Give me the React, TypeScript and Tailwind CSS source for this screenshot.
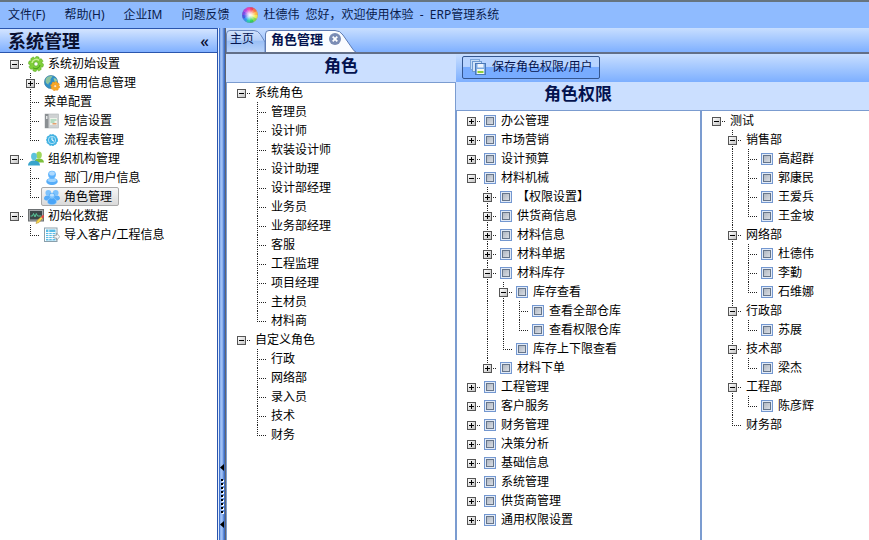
import { useState, type ReactNode } from "react";

type TreeNode = {
  label: string;
  icon?: ReactNode;
  check?: boolean;
  selected?: boolean;
  collapsed?: boolean;
  children?: TreeNode[];
};

/* ---------- icons ---------- */

const GearShape = ({ fill, stroke, hole }: { fill: string; stroke: string; hole: string }) => (
  <>
    {[0, 45, 90, 135].map((a) => (
      <rect key={a} x="6" y=".5" width="4" height="15" rx="1.500" fill={fill} stroke={stroke} strokeWidth=".5" transform={`rotate(${a + 12} 8 8)`} />
    ))}
    <circle cx="8" cy="8" r="5.600" fill={fill} />
    <circle cx="8" cy="8" r="2.200" fill={hole} stroke={stroke} strokeWidth=".8" />
  </>
);

const icon = "h-4 w-4 shrink-0";

const GearIcon = () => (
  <svg className={icon} viewBox="0 0 16 16">
    <GearShape fill="#7fcf3a" stroke="#58aa22" hole="#fff" />
    <path d="M4 7a4.300 4.300 0 0 1 7-2.600" fill="none" stroke="#c8f092" strokeWidth="1.500" />
    <path d="M12 9a4.300 4.300 0 0 1-7 2.600" fill="none" stroke="#4fa51e" strokeWidth="1.200" />
  </svg>
);

const GlobeIcon = () => (
  <svg className={icon} viewBox="0 0 16 16">
    <circle cx="7" cy="7" r="6.600" fill="#2f8fc8" stroke="#3a7c9a" strokeWidth=".6" />
    <path d="M2 3.500C4 .8 7 .6 8.500 1.300 8 3 6 3.500 6.500 5.500 7 7.500 4.500 7 4.500 9.500 2.500 9 .8 7 2 3.500z" fill="#8cc4a0" />
    <path d="M9.500 3.500c2-.6 3 .5 3.600 2.500L11 7.500z" fill="#9ccfa0" />
    <g transform="translate(6.200 6.200) scale(.62)">
      <GearShape fill="#f9a825" stroke="#e07f10" hole="#fff3d0" />
    </g>
  </svg>
);

const BookIcon = () => (
  <svg className={icon} viewBox="0 0 16 16">
    <rect x="1" y="1" width="13.500" height="14" fill="#cfd2d3" stroke="#b0b4b6" strokeWidth=".6" />
    <rect x="1" y="1" width="3.500" height="14" fill="#8b9093" />
    <rect x="2" y="3" width="1.500" height="3" fill="#e4e6e6" />
    <rect x="6" y="5" width="7" height="7" fill="#eef3ea" />
    <path d="M6.500 7h6M6.500 9h4" stroke="#7cc49a" strokeWidth="1" />
    <path d="M8.500 10.800h4" stroke="#e28b52" strokeWidth="1.200" />
  </svg>
);

const ClockIcon = () => (
  <svg className={icon} viewBox="0 0 16 16">
    <circle cx="8" cy="8" r="5.500" fill="#39aee0" stroke="#4bb4e2" strokeWidth="1" strokeDasharray="2 1.200" />
    <circle cx="8" cy="8" r="3.700" fill="#44b4e6" stroke="#c8ecfa" strokeWidth=".8" />
    <path d="M8 5.400V8l2 1.200" fill="none" stroke="#fff" strokeWidth="1" />
  </svg>
);

const TeamIcon = () => (
  <svg className={icon} viewBox="0 0 16 16">
    <ellipse cx="11" cy="4" rx="2.800" ry="3.500" fill="#9ed65a" />
    <path d="M7 11.500V9c.8-1 2-1.500 4-1.500 3 0 4.800 1.500 5 4z" fill="#7cc03c" />
    <ellipse cx="6" cy="5.500" rx="2.900" ry="3.700" fill="#5cc2dc" />
    <path d="M0 14.500c.3-3.500 2.500-5 6-5s5.700 1.500 6 5z" fill="#38a4cc" />
  </svg>
);

const UserIcon = () => (
  <svg className={icon} viewBox="0 0 16 16">
    <path d="M2.300 11.500C2.500 8.800 5 8 8 8s5.500.8 5.700 3.500c.2 4.800-11.600 4.800-11.400 0z" fill="#56adf9" />
    <ellipse cx="8" cy="10.300" rx="4.500" ry="1.800" fill="#9ed4ff" />
    <circle cx="8" cy="4.600" r="3.900" fill="#5cb2fc" />
    <ellipse cx="8" cy="3.400" rx="2.800" ry="2.100" fill="#aedaff" />
  </svg>
);

const GroupIcon = () => (
  <svg className={icon} viewBox="0 0 16 16">
    <path d="M0 9.500C0 7 2 6.500 4 6.500s3 .7 3 3-7 3-7 0zM9 9.500c0-2.500 1-3 3-3s4 .5 4 3-7 3-7 0z" fill="#55abf8" />
    <circle cx="4.300" cy="3.800" r="2.900" fill="#7cc2fd" />
    <circle cx="11.700" cy="3.800" r="2.900" fill="#7cc2fd" />
    <path d="M3.500 13c0-3 2-3.800 4.500-3.800s4.500.8 4.500 3.800c0 3.500-9 3.500-9 0z" fill="#4aa5f8" stroke="#a4d5fe" strokeWidth=".6" />
    <circle cx="8" cy="7" r="3" fill="#7fc4fe" stroke="#4ba2ee" strokeWidth=".5" />
    <ellipse cx="8" cy="6.200" rx="1.900" ry="1.400" fill="#bfe2ff" />
  </svg>
);

const MonitorIcon = () => (
  <svg className={icon} viewBox="0 0 16 16">
    <rect x=".5" y="1.500" width="15" height="11.500" fill="#a5a9ab" stroke="#6c7072" />
    <rect x="2" y="3" width="12" height="8.500" fill="#3c4648" />
    <path d="M2.500 8h2l1-2.500L7 9l1.300-3.500L9.500 8h4" fill="none" stroke="#59d6a2" strokeWidth=".9" />
    <path d="m13.500 8.500-4.500 4-1 3 3-1 4-4.500z" fill="#f5d750" stroke="#a8842a" strokeWidth=".5" />
    <path d="m13 9 1.500 1.500 1.500-1.600V7.300l-1.200-.3z" fill="#e04848" />
  </svg>
);

const ImportIcon = () => (
  <svg className={icon} viewBox="0 0 16 16">
    <rect x=".5" y="1" width="12.500" height="13.500" fill="#fff" stroke="#8aa0ac" />
    <rect x="2" y="2.500" width="9.500" height="11" fill="#58bce6" />
    <path d="M2 5.500h9.500M2 7.500h9.500M2 9.500h9.500M2 11.500h9.500" stroke="#fff" strokeWidth=".9" />
    <path d="M4.800 2.500v11M8.200 5v8.500" stroke="#fff" strokeWidth=".8" />
    <path d="M10 8.300h2.500V6l3.300 3.700-3.300 3.600V11H10z" fill="#f4f6f6" stroke="#8a9296" strokeWidth=".7" />
  </svg>
);

const SaveIcon = () => (
  <svg className={icon} viewBox="0 0 16 16">
    <rect x=".5" y=".5" width="9" height="10" fill="#c4dcf6" stroke="#7ba5da" />
    <rect x="2.500" y="2.500" width="9" height="10" fill="#d2e4f8" stroke="#6f9bd2" />
    <rect x="5.500" y="4.500" width="10" height="11" fill="#7fabe2" stroke="#4a78b8" />
    <rect x="7.500" y="5" width="6" height="3.500" fill="#eef5fd" />
    <rect x="7" y="10" width="7" height="5" fill="#f4f8ee" />
    <path d="M7.500 13h6" stroke="#8fd03c" strokeWidth="2" />
  </svg>
);

const WHEEL = [
  ["#f5405c", 0], ["#fb7440", 30], ["#ffb840", 60], ["#f0ea48", 90], ["#84e04c", 120], ["#30d05c", 150],
  ["#28ccb4", 180], ["#2c98ee", 210], ["#4058e8", 240], ["#7a48e8", 270], ["#bc44e0", 300], ["#ee40b4", 330],
] as const;

const ColorWheel = () => (
  <svg className={icon} viewBox="0 0 16 16">
    <defs>
      <radialGradient id="glow">
        <stop offset="0" stopColor="#fff" />
        <stop offset=".3" stopColor="#fff" stopOpacity=".7" />
        <stop offset=".8" stopColor="#fff" stopOpacity="0" />
      </radialGradient>
    </defs>
    {WHEEL.map(([c, a]) => (
      <path key={a} d="M8 8 8 0A8 8 0 0 1 12.300 1.250z" fill={c} transform={`rotate(${a} 8 8)`} />
    ))}
    <circle cx="8" cy="8" r="7.500" fill="url(#glow)" />
    <circle cx="8" cy="8" r="7.600" fill="none" stroke="#8a7aa8" strokeOpacity=".5" strokeWidth=".7" />
  </svg>
);

/* ---------- data ---------- */

const names = (...list: string[]): TreeNode[] => list.map((label) => ({ label }));
const boxes = (...list: string[]): TreeNode[] => list.map((label) => ({ label, check: true }));
const closed = (...list: string[]): TreeNode[] =>
  list.map((label) => ({ label, check: true, collapsed: true, children: [] }));

const NAV: TreeNode[] = [
  {
    label: "系统初始设置",
    icon: <GearIcon />,
    children: [
      { label: "通用信息管理", icon: <GlobeIcon />, collapsed: true, children: [] },
      { label: "菜单配置" },
      { label: "短信设置", icon: <BookIcon /> },
      { label: "流程表管理", icon: <ClockIcon /> },
    ],
  },
  {
    label: "组织机构管理",
    icon: <TeamIcon />,
    children: [
      { label: "部门/用户信息", icon: <UserIcon /> },
      { label: "角色管理", icon: <GroupIcon />, selected: true },
    ],
  },
  {
    label: "初始化数据",
    icon: <MonitorIcon />,
    children: [{ label: "导入客户/工程信息", icon: <ImportIcon /> }],
  },
];

const ROLES: TreeNode[] = [
  {
    label: "系统角色",
    children: names("管理员", "设计师", "软装设计师", "设计助理", "设计部经理", "业务员", "业务部经理", "客服", "工程监理", "项目经理", "主材员", "材料商"),
  },
  { label: "自定义角色", children: names("行政", "网络部", "录入员", "技术", "财务") },
];

const PERMISSIONS: TreeNode[] = [
  ...closed("办公管理", "市场营销", "设计预算"),
  {
    label: "材料机械",
    check: true,
    children: [
      ...closed("【权限设置】", "供货商信息", "材料信息", "材料单据"),
      {
        label: "材料库存",
        check: true,
        children: [
          { label: "库存查看", check: true, children: boxes("查看全部仓库", "查看权限仓库") },
          { label: "库存上下限查看", check: true },
        ],
      },
      ...closed("材料下单"),
    ],
  },
  ...closed("工程管理", "客户服务", "财务管理", "决策分析", "基础信息", "系统管理", "供货商管理", "通用权限设置"),
];

const USERS: TreeNode[] = [
  {
    label: "测试",
    children: [
      { label: "销售部", children: boxes("高超群", "郭康民", "王爱兵", "王金坡") },
      { label: "网络部", children: boxes("杜德伟", "李勤", "石维娜") },
      { label: "行政部", children: boxes("苏展") },
      { label: "技术部", children: boxes("梁杰") },
      { label: "工程部", children: boxes("陈彦辉") },
      { label: "财务部" },
    ],
  },
];

/* ---------- tree ---------- */

const DOTS_V = "bg-[repeating-linear-gradient(to_bottom,#222_0_1px,transparent_1px_2px)]";
const DOTS_H = "bg-[repeating-linear-gradient(to_right,#222_0_1px,transparent_1px_2px)]";

function Guide({ line }: { line: boolean }) {
  return <span className="flex h-full w-4 shrink-0 pl-2">{line && <span className={`h-full w-px ${DOTS_V}`} />}</span>;
}

function Branch({ node, guides, last }: { node: TreeNode; guides: boolean[]; last: boolean }) {
  const [open, setOpen] = useState(!node.collapsed);
  const root = guides.length === 0;
  return (
    <li>
      <div className="flex h-[19px] items-center">
        {guides.map((line, i) => (
          <Guide key={i} line={line} />
        ))}
        <span className="grid h-full w-[19px] shrink-0">
          {!root && <span className={`col-start-1 row-start-1 ml-2 w-px ${last ? "h-[11px]" : "h-full"} ${DOTS_V}`} />}
          <span className={`col-start-1 row-start-1 mt-2.5 ml-2 h-px w-2.5 ${DOTS_H}`} />
          {node.children && (
            <button
              type="button"
              aria-label={`${open ? "收起" : "展开"}${node.label}`}
              onClick={() => setOpen(!open)}
              className="col-start-1 row-start-1 mt-1.5 ml-1 grid h-[9px] w-[9px] place-items-center border border-[#555] bg-linear-to-br from-white to-[#c4c4c4]"
            >
              <span className="col-start-1 row-start-1 h-px w-[5px] bg-black" />
              {!open && <span className="col-start-1 row-start-1 h-[5px] w-px bg-black" />}
            </button>
          )}
        </span>
        {node.check ? (
          <label className="flex items-center gap-[5px] pl-0.5 whitespace-nowrap">
            <input
              type="checkbox"
              className="mt-px h-3 w-3 shrink-0 appearance-none border border-[#7397d0] bg-linear-to-br from-[#a4acb8] to-[#e6e9ee] shadow-[inset_0_0_0_1px_#e2ebf8,inset_0_0_0_2px_#66758a] checked:bg-[#3f6fb8]"
            />
            <span>{node.label}</span>
          </label>
        ) : (
          <button
            type="button"
            className={`flex h-[19px] items-center gap-1 whitespace-nowrap ${
              node.selected
                ? "rounded-xs border border-[#a9a9a9] bg-linear-to-b from-[#f6f6f6] to-[#dadada] pr-1.5 pl-0.5"
                : "px-[3px]"
            }`}
          >
            {node.icon}
            <span>{node.label}</span>
          </button>
        )}
      </div>
      {open && node.children && <Tree nodes={node.children} guides={[...guides, !root && !last]} />}
    </li>
  );
}

function Tree({ nodes, guides = [] }: { nodes: TreeNode[]; guides?: boolean[] }) {
  return (
    <ul>
      {nodes.map((n, i) => (
        <Branch key={n.label} node={n} guides={guides} last={i === nodes.length - 1} />
      ))}
    </ul>
  );
}

/* ---------- page parts ---------- */

function MenuBar() {
  return (
    <header className="flex h-7 items-center border-t-2 border-[#66747f] bg-[#8fbbff] px-2 whitespace-nowrap text-[#0a1c4c]">
      <nav className="flex gap-[19px]">
        {["文件(F)", "帮助(H)", "企业IM", "问题反馈"].map((m) => (
          <button key={m} type="button">
            {m}
          </button>
        ))}
      </nav>
      <p className="ml-3 flex items-center gap-1.5">
        <ColorWheel />
        <span>杜德伟</span>
        <span>您好，欢迎使用体验&nbsp; - &nbsp;ERP管理系统</span>
      </p>
    </header>
  );
}

function Sidebar() {
  return (
    <aside className="flex w-[218px] shrink-0 flex-col border-r border-[#2a55ad] bg-white">
      <div className="flex h-[25px] items-center justify-between border-y border-[#2a55ad] bg-linear-to-b from-[#d3e4ff] to-[#80b0ff] px-2 text-[#0a1030]">
        <h1 className="text-lg leading-5 font-bold">系统管理</h1>
        <button type="button" aria-label="收起侧栏" className="text-base leading-4 font-medium">
          «
        </button>
      </div>
      <div className="pt-px pl-1.5">
        <Tree nodes={NAV} />
      </div>
    </aside>
  );
}

const Arrow = () => (
  <svg className="h-[7px] w-1" viewBox="0 0 4 7">
    <path d="M4 0v7L0 3.500z" fill="#000" />
  </svg>
);

function Splitter() {
  return (
    <div className="flex w-2 shrink-0 flex-col items-center justify-end gap-2 border-r border-[#60656f] bg-[linear-gradient(to_right,#e4eeff_0_1px,#3f72cc_1px_2px,#86aeee_2px,#a9c6f6_4px,#6f9ae2_5px,#2f5fb8_7px)] pb-3">
      <Arrow />
      <span className="flex flex-col gap-0.5">
        {Array.from({ length: 9 }, (_, i) => (
          <span key={i} className="h-0.5 w-0.5 bg-black shadow-[1px_1px_0_#fff]" />
        ))}
      </span>
      <Arrow />
    </div>
  );
}

function Tabs() {
  return (
    <div role="tablist" className="flex h-[26px] items-end border-b-2 border-[#626f88] bg-linear-to-b from-[#c8deff] to-[#7fb0ff] text-[#04134e]">
      <button type="button" role="tab" className="relative h-[22px] w-[39px] pb-1 pl-1 text-left">
        <svg className="absolute inset-0 h-full w-full" viewBox="0 0 39 22" preserveAspectRatio="none">
          <defs>
            <linearGradient id="tabIdle" x1="0" y1="0" x2="0" y2="1">
              <stop offset="0" stopColor="#d3e3fb" />
              <stop offset=".45" stopColor="#b4cff8" />
              <stop offset=".5" stopColor="#9abff5" />
              <stop offset="1" stopColor="#b9d3fa" />
            </linearGradient>
          </defs>
          <path d="M.5 22V4Q.5.500 4 .5h24q4 0 6.500 4L39 12v10" fill="url(#tabIdle)" stroke="#6685bd" />
        </svg>
        <span className="relative">主页</span>
      </button>
      <div className="relative flex h-[22px] w-[91px] items-center gap-1.5 pb-1 pl-1.5">
        <svg className="absolute inset-0 h-full w-full" viewBox="0 0 91 22" preserveAspectRatio="none">
          <path d="M.5 22V4Q.5.500 4 .5h66q5 0 8 4.500L87 18q2 3.500 4 4" fill="#fafcff" stroke="#5e7cb4" />
        </svg>
        <button type="button" role="tab" aria-selected="true" className="relative text-[13px] leading-4 font-bold whitespace-nowrap">
          角色管理
        </button>
        <button type="button" aria-label="关闭" className="relative">
          <svg className="h-3 w-3" viewBox="0 0 12 12">
            <circle cx="6" cy="6" r="6" fill="#7a8cb4" />
            <path d="m3.700 3.700 4.600 4.600m0-4.600L3.700 8.300" stroke="#fff" strokeWidth="1.800" />
          </svg>
        </button>
      </div>
    </div>
  );
}

function RolePage() {
  return (
    <div className="flex flex-1">
      <section className="flex w-[230px] shrink-0 flex-col">
        <h2 className="h-7 bg-[#cbdfff] text-center text-[17px] leading-6 font-bold text-[#04134e]">角色</h2>
        <div className="flex-1 border-x border-t border-[#7b9cd0] bg-white pl-1.5">
          <Tree nodes={ROLES} />
        </div>
      </section>
      <section className="flex min-w-0 flex-1 flex-col">
        <div className="flex h-7 items-center bg-linear-to-b from-[#c8deff] to-[#7dafff] px-1.5 pb-0.5">
          <button
            type="button"
            className="flex h-[23px] items-center gap-1.5 rounded-xs border border-[#34568f] bg-linear-to-b from-[#b8d4ff] from-45% to-[#78acff] to-50% px-[7px] whitespace-nowrap text-[#04134e]"
          >
            <SaveIcon />
            <span>保存角色权限/用户</span>
          </button>
        </div>
        <div className="bg-[#cbdfff]">
          <h2 className="h-7 w-[244px] text-center text-[17px] leading-6 font-bold text-[#04134e]">角色权限</h2>
        </div>
        <div className="flex flex-1 border-t border-[#7b9cd0] bg-white">
          <div className="w-[244px] shrink-0 border-l border-[#7b9cd0] pl-1.5">
            <Tree nodes={PERMISSIONS} />
          </div>
          <div className="flex-1 border-l-2 border-[#7b9cd0] pl-1.5">
            <Tree nodes={USERS} />
          </div>
        </div>
      </section>
    </div>
  );
}

export default function App() {
  return (
    <div className="flex min-h-screen flex-col bg-white font-['Noto_Sans','Noto_Sans_CJK_SC',sans-serif] text-xs leading-4 text-black">
      <MenuBar />
      <div className="flex flex-1">
        <Sidebar />
        <Splitter />
        <main className="flex min-w-0 flex-1 flex-col">
          <Tabs />
          <RolePage />
        </main>
      </div>
    </div>
  );
}
